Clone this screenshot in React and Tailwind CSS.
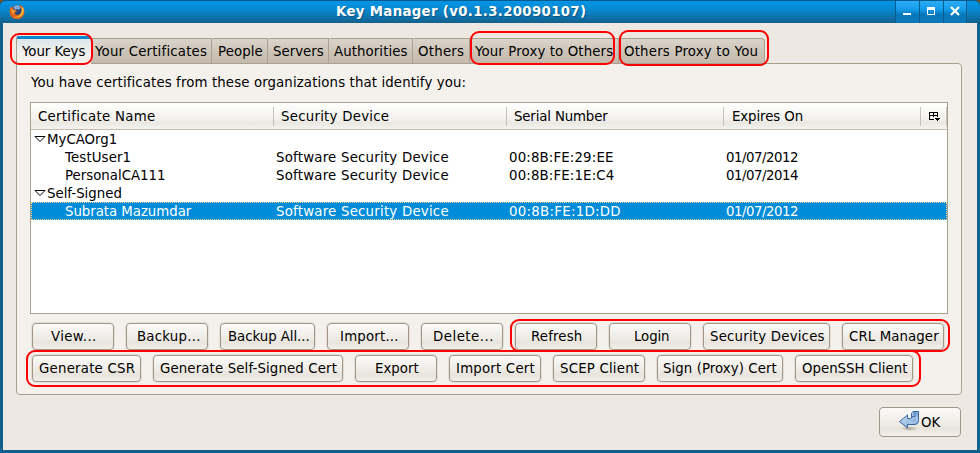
import React from "react";

const tabs = [
  ["Your Certificates", "w-[121px] pl-[4px] tracking-[0.19px]"],
  ["People", "w-[56px] pl-[6px] tracking-[0.08px]"],
  ["Servers", "w-[61px] pl-[5px]"],
  ["Authorities", "w-[84px] pl-[5px] tracking-[0.08px]"],
  ["Others", "w-[57px] pl-[5px] tracking-[0.25px]"],
  ["Your Proxy to Others", "w-[149px] pl-[5px] tracking-[0.12px]"],
  ["Others Proxy to You", "w-[146px] pl-[5px] rounded-tr-[4px] tracking-[0.2px]"],
];

const rowOne = [
  ["View...", "w-[82px] pl-[18px] tracking-[0.35px]"],
  ["Backup...", "w-[82px] pl-[10px] tracking-[0.23px]"],
  ["Backup All...", "w-[95px] pl-[7px] tracking-[-0.05px]"],
  ["Import...", "w-[82px] pl-[12px] tracking-[0.2px]"],
  ["Delete...", "w-[82px] pl-[11px] tracking-[0.5px]"],
  ["Refresh", "w-[82px] pl-[15px] tracking-[0.15px]"],
  ["Login", "w-[82px] pl-[24px] tracking-[-0.1px]"],
  ["Security Devices", "w-[127px] pl-[6px] tracking-[0.2px]"],
  ["CRL Manager", "w-[102px] pl-[6px] tracking-[0.1px]"],
];

const rowTwo = [
  ["Generate CSR", "w-[109px] pl-[6px] tracking-[0.22px]"],
  ["Generate Self-Signed Cert", "w-[190px] pl-[6px] tracking-[0.13px]"],
  ["Export", "w-[82px] pl-[19px]"],
  ["Import Cert", "w-[92px] pl-[6px] tracking-[0.2px]"],
  ["SCEP Client", "w-[92px] pl-[6px] tracking-[0.2px]"],
  ["Sign (Proxy) Cert", "w-[126px] pl-[5px] tracking-[0.07px]"],
  ["OpenSSH Client", "w-[118px] pl-[6px]"],
];

const rows = [
  { group: "MyCAOrg1" },
  { name: "TestUser1", serial: "00:8B:FE:29:EE", expires: "01/07/2012", spacing: "tracking-[0.12px]" },
  { name: "PersonalCA111", serial: "00:8B:FE:1E:C4", expires: "01/07/2014", spacing: "tracking-normal" },
  { group: "Self-Signed" },
  { name: "Subrata Mazumdar", serial: "00:8B:FE:1D:DD", expires: "01/07/2012", selected: true, spacing: "tracking-[-0.04px]" },
];

const annotations = [
  "left-[10px] top-[33px] w-[83px] h-[32px]",
  "left-[470px] top-[31px] w-[145px] h-[34px]",
  "left-[619px] top-[30px] w-[150px] h-[36px]",
  "left-[510px] top-[319px] w-[440px] h-[33px]",
  "left-[26px] top-[350px] w-[895px] h-[37px]",
];

function Button({ label, size }) {
  return (
    <button
      className={`h-[27px] shrink-0 rounded-[4px] border border-[#a19789] bg-[linear-gradient(#fbfaf8,#f0ede8_50%,#e8e4dd_75%,#f3f1ed)] text-left leading-[25px] shadow-[0_0_0_1px_#e3ded6] ${size}`}
    >
      {label}
    </button>
  );
}

function Firefox() {
  return (
    <svg width="16" height="16" viewBox="0 0 16 16">
      <circle cx="8" cy="7.5" r="6.8" fill="#25497f" />
      <path d="M4 3Q8-1 12 3L10 6 8 5 6 6z" fill="#7fa9d2" />
      <path d="M1 4Q-.5 10 3 13.5Q8 17 13 13.5Q17 9 14.5 4Q13 1 10 1Q13.5 4 12.5 8Q11 11.5 7.8 11Q5.5 10 5.8 8L8 7.5 7 6H5L3 2.5Z" fill="#df651c" />
      <path d="M14.3 4Q15.5 8 12.7 11.5Q9 14.5 5 13Q10 13.5 12.3 9Q13.5 6 12.5 3z" fill="#ffc13c" />
      <path d="M2 4L5 6.5 7 7 5.5 8 5 10 3 9z" fill="#f49b31" />
    </svg>
  );
}

function EnterArrow() {
  return (
    <svg width="22" height="22" viewBox="0 0 22 22" className="shrink-0">
      <defs>
        <linearGradient id="arrow" x1="0" y1="0" x2="1" y2="1">
          <stop offset="0" stopColor="#dceafa" />
          <stop offset="1" stopColor="#6f9dd0" />
        </linearGradient>
        <radialGradient id="shade">
          <stop offset="0" stopColor="#77736c" stopOpacity=".55" />
          <stop offset="1" stopColor="#77736c" stopOpacity="0" />
        </radialGradient>
      </defs>
      <ellipse cx="11.5" cy="17.5" rx="9" ry="2.5" fill="url(#shade)" />
      <path d="M13.5 2.5L15 .5H20.5V9.5Q20.5 13.5 16 13.5H9.5V17L1.5 10.5 9.5 4V7.5H12.5Q14 7.5 14 6H13.5Z" fill="url(#arrow)" stroke="#35659f" />
      <path d="M15 1H20V4.5H15Z" fill="#87add9" />
      <path d="M14 5.5H17V1.5" fill="none" stroke="#4473ad" />
      <path d="M19 5.5V9.5Q18.5 12 15 12H11" fill="none" stroke="#b8d2ee" />
    </svg>
  );
}

export default function App() {
  return (
    <div className="relative h-[453px] w-[980px] overflow-hidden bg-[#705020] font-['DejaVu_Sans',sans-serif] text-[13.333px] text-black whitespace-nowrap">
      <div className="flex h-full flex-col rounded-t-[6px] bg-[#12618d]">
        <header className="flex h-[23px] shrink-0 rounded-t-[6px] border-t border-[#075b8d] bg-[linear-gradient(#0095e8,#0788ce_40%,#12618d)]">
          <div className="w-[50px] pt-[3px] pl-[9px]"><Firefox /></div>
          <h1 className="w-[845px] pl-[286px] text-[13.333px] leading-[21px] font-bold tracking-[0.32px] text-white [text-shadow:1px_1px_0_#065783]">Key Manager (v0.1.3.20090107)</h1>
          <div className="flex h-[22px] text-white [&>div]:h-full [&>div]:border-l [&>div]:border-[#085b8f] [&>div]:bg-[linear-gradient(#2bacf8,#139be8_40%,#0878bb_60%,#0b78b8)]">
            <div className="w-[24px]"><svg width="23" height="22"><path d="M7 12h8v2H7z" fill="white" /></svg></div>
            <div className="w-[24px]"><svg width="23" height="22"><path d="M7.5 6.5h7v7h-7z" fill="none" stroke="white" /><path d="M7 6h8v3H7z" fill="white" /></svg></div>
            <div className="w-[24px] border-r"><svg width="22" height="22"><path d="M7 6l8 8M15 6l-8 8" stroke="white" strokeWidth="2.2" /></svg></div>
          </div>
        </header>

        <main className="mx-[3px] mb-[3px] flex min-h-0 flex-1 flex-col bg-[#ede9e2] pt-[13px]">
          <nav className="ml-[13px] flex h-[27px] shrink-0 items-end">
            <button className="relative z-10 -mb-px h-[28px] w-[75px] rounded-t-[3px] border-t-[3px] border-l border-t-[#0b86cb] border-l-[#a99f8d] bg-[linear-gradient(#dce7ec,#f4f1ed_70%)] pl-[5px] text-left leading-[20px] tracking-[-0.05px]">Your Keys</button>
            {tabs.map(([label, size]) => (
              <button key={label} className={`h-[25px] shrink-0 rounded-tl-[2px] border-t border-r border-[#aaa08f] bg-[linear-gradient(#dbd4ca,#cbc2b6_60%,#c3b9ac)] text-left leading-[25px] ${size}`}>{label}</button>
            ))}
          </nav>

          <section className="ml-[13px] flex h-[332px] w-[946px] shrink-0 flex-col rounded-[4px] rounded-tl-none border border-[#a99f8d] bg-[#f4f1ed] px-[13px]">
            <p className="h-[38px] shrink-0 pt-[9px] pl-[1px] leading-[20px] tracking-[0.115px]">You have certificates from these organizations that identify you:</p>
            <div className="h-[212px] w-[918px] shrink-0 border border-[#a99f8d] bg-white">
              <div className="flex h-[27px] items-center border-b border-[#c4bcb0] bg-[linear-gradient(#fff,#f2f0ec_65%,#ebe8e2_75%,#f4f2ef)] leading-[20px] [&>div]:h-[19px] [&>div]:border-r [&>div]:border-[#c7c1b8]">
                <div className="w-[243px] pl-[7px] tracking-[0.29px]">Certificate Name</div>
                <div className="w-[233px] pl-[7px] tracking-[0.25px]">Security Device</div>
                <div className="w-[217px] pl-[7px] tracking-[-0.15px]">Serial Number</div>
                <div className="w-[197px] pl-[8px] tracking-[-0.1px]">Expires On</div>
                <div className="flex w-[26px] items-center pl-[8px]">
                  <svg width="12" height="11" fill="black" shapeRendering="crispEdges"><path d="M0 1h9v1H0zM0 1h1v8H0zM8 1h1v5H8zM4 1h1v5H4zM0 4h9v1H0zM0 8h5v1H0zM6 7h5v1H6zM7 8h3v1H7zM8 9h1v1H8z" /></svg>
                </div>
              </div>
              {rows.map((r) =>
                r.group ? (
                  <div key={r.group} className="flex h-[18px] items-center pl-[3px] leading-[18px]">
                    <svg width="13" height="10" className="shrink-0" fill="none" stroke="black"><path d="M1 2.5h10L6 7.5z" /></svg>
                    <span className="pt-[2px]">{r.group}</span>
                  </div>
                ) : (
                  <div key={r.name} className={`flex h-[18px] ${r.selected ? "border border-dotted border-[#f3d98e] bg-[#008cd8] leading-[18px] text-white [&>div]:relative [&>div]:-left-px" : "leading-[20px]"}`}>
                    <div className={`w-[245px] pl-[34px] ${r.spacing}`}>{r.name}</div>
                    <div className="w-[233px] tracking-[0.22px]">Software Security Device</div>
                    <div className={r.selected ? "w-[217px] tracking-[0.28px]" : "w-[217px] tracking-[0.15px]"}>{r.serial}</div>
                    <div className="tracking-[-0.48px]">{r.expires}</div>
                  </div>
                ),
              )}
            </div>
            <div className="mt-[9px] ml-[2px] flex gap-[12px]">
              {rowOne.map(([label, size]) => <Button key={label} label={label} size={size} />)}
            </div>
            <div className="mt-[5px] ml-[2px] flex gap-[12px]">
              {rowTwo.map(([label, size]) => <Button key={label} label={label} size={size} />)}
            </div>
          </section>
          <footer className="mt-[12px] mr-[16px] flex justify-end">
            <button className="flex h-[30px] w-[82px] items-center rounded-[4px] border border-[#a19789] bg-[linear-gradient(#fbfaf8,#f0ede8_50%,#e8e4dd_75%,#f3f1ed)] pl-[18px]"><EnterArrow /><span className="pt-[2px] pl-[1px]">OK</span></button>
          </footer>
        </main>
      </div>
      {annotations.map((place) => <div key={place} className={`pointer-events-none absolute z-20 rounded-[9px] border-2 border-[#ff0000] ${place}`} />)}
    </div>
  );
}
